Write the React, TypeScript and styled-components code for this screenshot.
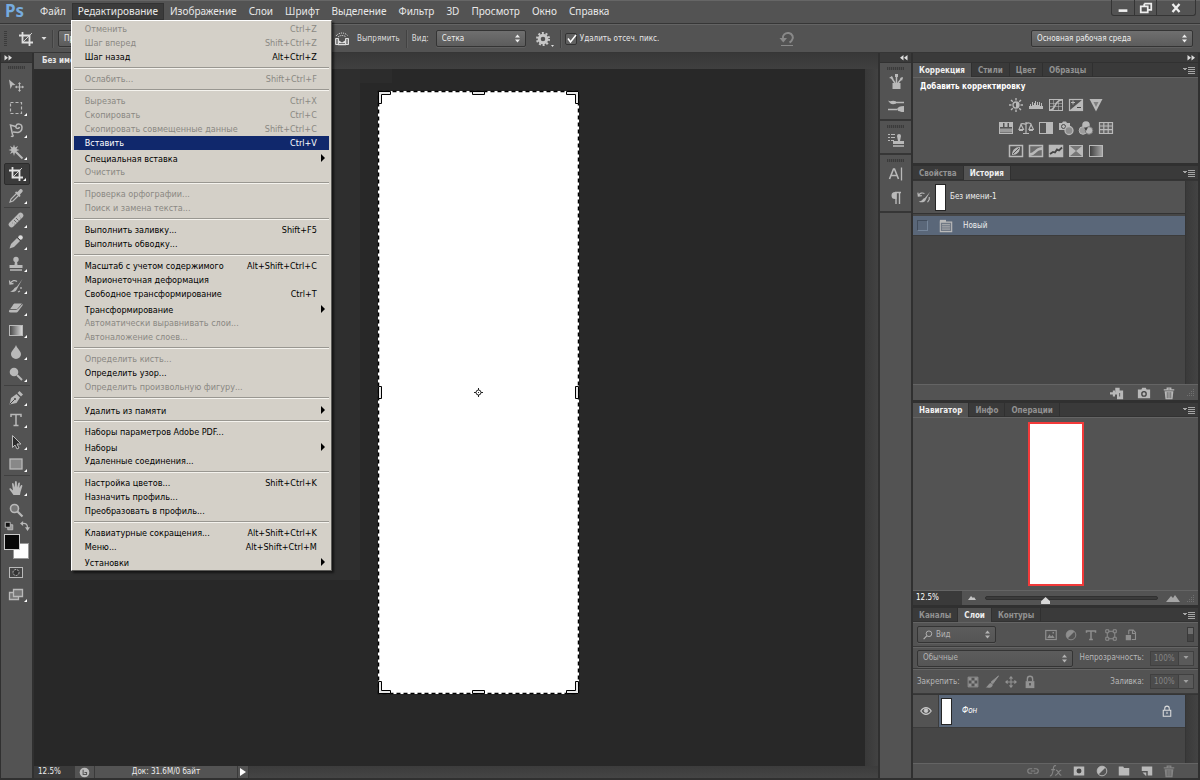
import React from "react";
import styled, { createGlobalStyle, css } from "styled-components";

const c = {
  face: "#535353",
  bar: "#3a3a3a",
  dark: "#2b2b2b",
  light: "#646464",
  list: "#464646",
  selected: "#5a6779",
  text: "#dedede",
  icon: "#b9b9b9",
};

const Global = createGlobalStyle`
  *, *::before, *::after { box-sizing: border-box; }
  body { margin: 0; background: ${c.dark}; }
  button, input, select {
    margin: 0; padding: 0; border: 0; background: none; color: inherit;
    font: inherit; border-radius: 0; outline: 0;
  }
  ul { list-style: none; margin: 0; padding: 0; }
  h2, p { margin: 0; font: inherit; }
  svg { display: block; flex: none; }
`;

const Shell = styled.div`
  display: flex;
  flex-direction: column;
  height: 100vh;
  min-height: 700px;
  overflow: hidden;
  color: ${c.text};
  font: 8px/12px "DejaVu Sans Condensed", "Liberation Sans", sans-serif;
`;

/* ---------- icons ---------- */

type IconProps = { size?: number; children: React.ReactNode };
const Icon = ({ size = 16, children }: IconProps) => (
  <svg width={size} height={size} viewBox="0 0 16 16" fill="none" stroke="currentColor" strokeWidth="1" aria-hidden="true">
    {children}
  </svg>
);

const CropIcon = () => (
  <Icon>
    <path d="M4.500 1v10.500H15M1 4.500h10.500V15" strokeWidth="1.800" />
    <path d="M4.500 11.500L14 2" strokeWidth=".9" />
  </Icon>
);

const toolGroups: { name: string; more?: boolean; art: React.ReactNode }[][] = [
  [
    { name: "Перемещение", art: <Icon><path d="M1 1.500l6.500 5.500-3.200.2L2.500 11z" fill="currentColor" stroke="none" /><path d="M11.500 5v8M7.500 9h8" strokeWidth="1.200" /><path d="M10 6l1.500-2L13 6zM10 12l1.500 2 1.500-2zM9 7.500L7 9l2 1.500zM14 7.500L16 9l-2 1.500z" fill="currentColor" stroke="none" /></Icon> },
    { name: "Область", more: true, art: <Icon><rect x="2.500" y="2.500" width="11" height="11" strokeDasharray="3 2" strokeWidth="1.200" /></Icon> },
    { name: "Лассо", more: true, art: <Icon><path d="M4.500 12.500L2.500 3l5 1.500M4.500 12.500c1.500 1.500 0 2.500-1.500 1.500M5 10l5 .5c2.500-.5 4-2.500 4-5 0-4-5-4.500-6-1.500s3 3 3.500 1" strokeWidth="1.500" /></Icon> },
    { name: "Волшебная палочка", more: true, art: <Icon><path d="M6 .5l1 3 3-1.500-1.500 3 3 1-3 1 1 3L7 8.500 6 12 5 8.500 2 10l1.500-3L.5 6l3-1L2 2l3 1.500z" fill="currentColor" stroke="none" /><path d="M8 8l6.500 6.500" strokeWidth="2" /></Icon> },
    { name: "Рамка", more: true, art: <CropIcon /> },
    { name: "Пипетка", more: true, art: <Icon><path d="M9 5L3 11l-1 3 3-1 6-6" strokeWidth="1.200" /><path d="M8 3.500l1.500.5L12 1.300c1.500-1 3.500 1 2.500 2.500L12 6.500l.5 1.500-1 1L7 4.500z" fill="currentColor" stroke="none" /></Icon> },
  ],
  [
    { name: "Восстанавливающая кисть", more: true, art: <Icon><path d="M3.500 12.500l9-9" strokeWidth="5.500" strokeLinecap="round" /><path d="M6 8l2.500 2.500M8 6l2.500 2.500M4 11h.5M6 12h.5M11 4h.5M12 6h.5" stroke="#666" /></Icon> },
    { name: "Карандаш", more: true, art: <Icon><path d="M1.500 14.500L3 10l6-6 3 3-6 6z" fill="currentColor" stroke="none" /><circle cx="12.500" cy="3.500" r="2.300" fill="#ddd" stroke="none" /><path d="M9.500 3.500l3 3" stroke="#444" /></Icon> },
    { name: "Штамп", more: true, art: <Icon><circle cx="8" cy="3.500" r="2.700" fill="currentColor" stroke="none" /><path d="M7 5h2l.5 4h5v3h-13V9h5z" fill="currentColor" stroke="none" /><path d="M2 14h12" strokeWidth="1.500" /></Icon> },
    { name: "Архивная кисть", more: true, art: <Icon><path d="M14.500 1L9 8.500 6.500 10c-1 2-2.500 3-4.500 3.500 3 1 6 .5 7-2.500l1-2z" fill="currentColor" stroke="none" /><path d="M2 6c2-4 5-4 7-2.500M1.500 2.500L2 6l3.500-.5M13 9v2M12 13l-2 1" strokeWidth="1.300" /></Icon> },
    { name: "Ластик", more: true, art: <Icon><path d="M7 3.500h6c1.500 0 2 1 1.500 2L10 11.500c-.5.700-1 1-2 1H2.500c-1.500 0-2-1-1.300-2L5 5c.5-1 1-1.500 2-1.500z" fill="currentColor" stroke="none" /><path d="M2 9.500h6.500c.7 0 1-.5 1.500-1L14 4" stroke="#666" /></Icon> },
    { name: "Градиент", more: true, art: <Icon><defs><linearGradient id="toolGradient"><stop stopColor="#444" /><stop offset="1" stopColor="#ddd" /></linearGradient></defs><rect x="1.500" y="3.500" width="13" height="10" fill="url(#toolGradient)" /></Icon> },
    { name: "Размытие", more: true, art: <Icon><path d="M8 1C6.500 5 3 7 3 10.200a5 4.800 0 0010 0C13 7 9.500 5 8 1z" fill="currentColor" stroke="none" /></Icon> },
    { name: "Осветлитель", more: true, art: <Icon><circle cx="6" cy="6" r="4.300" fill="currentColor" stroke="none" /><path d="M9 9l5 5" strokeWidth="2" /></Icon> },
  ],
  [
    { name: "Перо", more: true, art: <Icon><path d="M1.500 14.500L3 8l5.500-4 3.500 3.500L8.500 13zM9.500 3l2-2 3.500 3.500-2 2z" fill="currentColor" stroke="none" /><path d="M2 14l4.500-4.500" stroke="#444" /><circle cx="7" cy="9" r="1" fill="#444" stroke="none" /></Icon> },
    { name: "Текст", more: true, art: <Icon><path d="M3 5V2.500h10V5M8 2.500v11M5.500 13.500h5" strokeWidth="1.500" /></Icon> },
    { name: "Выделение контура", more: true, art: <Icon><path d="M4.500 1.500v12L7 11l2 4 2-1-2-4h4z" fill="#2c2c2c" /></Icon> },
    { name: "Прямоугольник", more: true, art: <Icon><rect x="2" y="3" width="12" height="10" fill="#888" strokeWidth="1.300" /></Icon> },
  ],
  [
    { name: "Рука", more: true, art: <Icon><path d="M5.500 15L1.500 9.500c-.5-1 .8-1.600 1.500-.8L5 10.500 4 4c0-1.200 1.500-1.200 1.700 0l.8 3.500L7 2c.1-1.200 1.700-1.200 1.800 0l.2 5.500L10.300 3c.4-1 1.700-.7 1.600.4L11.300 8l1.500-2.500c.6-.9 1.800-.3 1.500.7L12.500 12l-.5 3z" fill="currentColor" stroke="none" /></Icon> },
    { name: "Масштаб", art: <Icon><circle cx="6.500" cy="6.500" r="4" fill="#777" strokeWidth="1.600" /><path d="M9.500 9.500l5 5" strokeWidth="2.200" /></Icon> },
  ],
];

const Chevrons = ({ left }: { left?: boolean }) => (
  <svg width="8" height="6" viewBox="0 0 8 6" fill={c.text} aria-hidden="true">
    {left ? <path d="M3.500 0v5.500L0 2.800zM7.500 0v5.500L4 2.800z" /> : <path d="M.5 0v5.500L4 2.800zM4.500 0v5.500L8 2.800z" />}
  </svg>
);
const UpDown = () => (
  <svg width="7" height="9" viewBox="0 0 7 9" fill="currentColor" aria-hidden="true">
    <path d="M3.500 0.500L6 3.500H1zM3.500 8.500L1 5.500h5z" />
  </svg>
);
const Caret = () => (
  <svg width="6" height="4" viewBox="0 0 6 4" fill="currentColor" aria-hidden="true"><path d="M.5 0h5L3 3z" /></svg>
);
const Grip = styled.span<{ $down?: boolean }>`
  flex: none;
  display: block;
  ${p => p.$down
    ? css`width: 3px; height: 16px; background: repeating-linear-gradient(#3b3b3b 0 1px, transparent 1px 2px);`
    : css`width: 17px; height: 3px; background: repeating-linear-gradient(90deg, #3b3b3b 0 1px, #4c4c4c 1px 2px);`}
`;
const Corner = () => (
  <svg width="9" height="9" viewBox="0 0 9 9" stroke="#707070" strokeDasharray="1 1" aria-hidden="true">
    <path d="M8.500 1v8M6.500 3v6M4.500 5v4M2.500 7v2" />
  </svg>
);

/* ---------- menu bar ---------- */

const MenuBar = styled.header`
  display: flex;
  flex: none;
  height: 24px;
  background: ${c.face};
  border-top: 1px solid #666;
  border-bottom: 1px solid #363636;
`;
const Logo = styled.span`
  width: 34px;
  padding-left: 5px;
  color: #76abdf;
  font: 700 17px/20px "Noto Sans", sans-serif;
`;
const MenuNames = styled.ul`
  display: flex;
  align-items: flex-start;
  padding-top: 2px;
`;
const MenuHost = styled.li`
  position: relative;
`;
const MenuName = styled.button<{ $open?: boolean }>`
  display: block;
  height: 17px;
  padding: 0 6px;
  color: #e8e8e8;
  font: 10px/17px "Noto Sans", sans-serif;
  ${p => p.$open && css`background: #3b3b3b; box-shadow: inset 0 0 0 1px #333;`}
`;
const WindowButtons = styled.div`
  display: flex;
  margin: -1px 4px 0 auto;
  height: 16px;
  border: 1px solid #353535;
  border-top: 0;
  border-radius: 0 0 3px 3px;
`;
const WindowButton = styled.button<{ $wide?: boolean }>`
  display: flex;
  align-items: center;
  justify-content: center;
  width: ${p => (p.$wide ? 39 : 22)}px;
  color: #eee;
  & + & { border-left: 1px solid #353535; }
`;

/* ---------- drop-down menu ---------- */

const Drop = styled.ul`
  position: absolute;
  z-index: 10;
  top: 100%;
  left: -1px;
  width: 261px;
  padding: 1px 2px;
  background: #d4d0c8;
  border: 1px solid #fff;
  border-right-color: #5c5b58;
  border-bottom-color: #5c5b58;
  box-shadow: 2px 2px 2px rgba(0, 0, 0, 0.55);
`;
const Command = styled.button<{ $on?: boolean; $sub?: boolean }>`
  display: flex;
  justify-content: space-between;
  align-items: center;
  width: 100%;
  height: ${p => (p.$sub ? 15 : 14)}px;
  padding: ${p => (p.$sub ? "2px 3px 0 11px" : "0 12px 0 11px")};
  background: ${p => (p.$on ? "#10286c" : "transparent")};
  color: ${p => (p.$on ? "#fff" : "#000")};
  font-size: 9px;
  line-height: 14px;
  text-align: left;
  white-space: nowrap;
  &:disabled { color: #8a8883; }
`;
const Rule = styled.li`
  height: 8px;
  padding-top: 3px;
  &::before {
    content: "";
    display: block;
    height: 2px;
    background: #999791;
    border-bottom: 1px solid #f5f3ee;
  }
`;
type Cmd = { t: string; k?: string; off?: boolean; sub?: boolean; on?: boolean };
const commands: Cmd[][] = [
  [{ t: "Отменить", k: "Ctrl+Z", off: true }, { t: "Шаг вперед", k: "Shift+Ctrl+Z", off: true }, { t: "Шаг назад", k: "Alt+Ctrl+Z" }],
  [{ t: "Ослабить...", k: "Shift+Ctrl+F", off: true }],
  [
    { t: "Вырезать", k: "Ctrl+X", off: true }, { t: "Скопировать", k: "Ctrl+C", off: true },
    { t: "Скопировать совмещенные данные", k: "Shift+Ctrl+C", off: true }, { t: "Вставить", k: "Ctrl+V", on: true },
    { t: "Специальная вставка", sub: true }, { t: "Очистить", off: true },
  ],
  [{ t: "Проверка орфографии...", off: true }, { t: "Поиск и замена текста...", off: true }],
  [{ t: "Выполнить заливку...", k: "Shift+F5" }, { t: "Выполнить обводку..." }],
  [
    { t: "Масштаб с учетом содержимого", k: "Alt+Shift+Ctrl+C" }, { t: "Марионеточная деформация" },
    { t: "Свободное трансформирование", k: "Ctrl+T" }, { t: "Трансформирование", sub: true },
    { t: "Автоматически выравнивать слои...", off: true }, { t: "Автоналожение слоев...", off: true },
  ],
  [{ t: "Определить кисть...", off: true }, { t: "Определить узор..." }, { t: "Определить произвольную фигуру...", off: true }],
  [{ t: "Удалить из памяти", sub: true }],
  [{ t: "Наборы параметров Adobe PDF..." }, { t: "Наборы", sub: true }, { t: "Удаленные соединения..." }],
  [{ t: "Настройка цветов...", k: "Shift+Ctrl+K" }, { t: "Назначить профиль..." }, { t: "Преобразовать в профиль..." }],
  [{ t: "Клавиатурные сокращения...", k: "Alt+Shift+Ctrl+K" }, { t: "Меню...", k: "Alt+Shift+Ctrl+M" }, { t: "Установки", sub: true }],
];
const EditMenu = () => (
  <Drop role="menu">
    {commands.map((group, i) => (
      <React.Fragment key={i}>
        {i > 0 && <Rule role="separator" />}
        {group.map(m => (
          <li key={m.t} role="none">
            <Command role="menuitem" disabled={m.off} $on={m.on} $sub={m.sub}>
              <span>{m.t}</span>
              {m.k && <span>{m.k}</span>}
              {m.sub && <svg width="5" height="10" viewBox="0 0 5 10" aria-hidden="true"><path d="M0 0v8l4-4z" fill="#000" /></svg>}
            </Command>
          </li>
        ))}
      </React.Fragment>
    ))}
  </Drop>
);
const names = ["Файл", "Редактирование", "Изображение", "Слои", "Шрифт", "Выделение", "Фильтр", "3D", "Просмотр", "Окно", "Справка"];

/* ---------- options bar ---------- */

const OptionsBar = styled.div`
  display: flex;
  align-items: center;
  flex: none;
  height: 29px;
  padding: 0 7px 0 4px;
  background: ${c.face};
  border-top: 1px solid ${c.light};
  border-bottom: 1px solid #363636;
`;
const Divider = styled.span`
  width: 2px;
  height: 18px;
  background: #424242;
  border-right: 1px solid #5d5d5d;
`;
const CurrentTool = styled.button`
  display: flex;
  align-items: center;
  gap: 7px;
  margin: 0 5px 0 11px;
  color: ${c.text};
`;
const SelectBox = styled.span<{ $width: number; $dim?: boolean }>`
  display: flex;
  align-items: center;
  width: ${p => p.$width}px;
  height: 17px;
  padding: 0 4px 0 5px;
  border: 1px solid #343434;
  border-radius: 2px;
  background: ${p => (p.$dim ? "linear-gradient(#5c5c5c, #555)" : "linear-gradient(#6f6f6f, #5c5c5c)")};
  box-shadow: 0 1px 0 #606060;
  color: ${p => (p.$dim ? "#b4b4b4" : "#eee")};
  select {
    appearance: none;
    flex: 1;
    min-width: 0;
  }
  svg + select { margin-left: 3px; }
`;
const Select = ({ label, value, width, dim, icon }: { label: string; value: string; width: number; dim?: boolean; icon?: React.ReactNode }) => (
  <SelectBox $width={width} $dim={dim}>
    {icon}
    <select aria-label={label} defaultValue={value}><option>{value}</option></select>
    <UpDown />
  </SelectBox>
);
const CropSize = styled.div`
  width: 276px;
  margin-left: 4px;
`;
const TextButton = styled.button`
  display: flex;
  align-items: center;
  gap: 7px;
  margin-right: 6px;
`;
const ViewGroup = styled.div`
  display: flex;
  align-items: center;
  gap: 7px;
  margin: 0 9px 0 4px;
`;
const GearButton = styled.button`
  display: flex;
  align-items: flex-end;
  margin-right: 6px;
  color: #c8c8c8;
`;
const CheckLabel = styled.label`
  display: flex;
  align-items: center;
  gap: 3px;
  margin-left: 3px;
  color: #e8e8e8;
  span { display: grid; }
  input, svg { grid-area: 1 / 1; }
  input {
    appearance: none;
    width: 12px;
    height: 12px;
    border: 1px solid #333;
    border-radius: 2px;
    background: #616161;
  }
  svg { pointer-events: none; }
`;
const ResetButton = styled.button`
  margin-left: 120px;
  color: #898989;
`;
const Right = styled.div`
  margin-left: auto;
`;

/* ---------- work area ---------- */

const WorkArea = styled.main`
  display: flex;
  flex: 1;
  min-height: 0;
  padding-bottom: 2px;
  background: #303030;
`;
const Tools = styled.nav`
  display: flex;
  flex-direction: column;
  align-items: center;
  flex: none;
  width: 31px;
  margin: 0 2px 0 1px;
  background: ${c.face};
`;
const StripHead = styled.div<{ $end?: boolean }>`
  display: flex;
  flex: none;
  align-items: center;
  justify-content: ${p => (p.$end ? "flex-end" : "flex-start")};
  align-self: stretch;
  height: 10px;
  padding: 0 3px;
  background: ${c.bar};
  border-bottom: 1px solid #313131;
`;
const ToolGroup = styled.div`
  display: flex;
  flex-direction: column;
  align-items: center;
  & + & { border-top: 1px solid #404040; padding-top: 1px; }
`;
const ToolsTop = styled.div`
  flex: none;
  height: 12px;
  padding-top: 3px;
`;
const ToolButton = styled.button<{ $on?: boolean }>`
  display: flex;
  align-items: center;
  justify-content: center;
  position: relative;
  width: 26px;
  height: 22px;
  padding-right: 2px;
  color: ${p => (p.$on ? "#e2e2e2" : c.icon)};
  ${p => p.$on && css`
    background: #3b3b3b;
    border: 1px solid #2c2c2c;
    border-radius: 2px;
  `}
`;
const Flyout = styled.svg`
  position: absolute;
  right: 3px;
  bottom: 3px;
`;
const More = () => (
  <Flyout width="3" height="3" viewBox="0 0 3 3" aria-hidden="true"><path d="M3 0v3H0z" fill="#fff" /></Flyout>
);
const SwapRow = styled.div`
  display: flex;
  justify-content: space-between;
  width: 26px;
  padding-bottom: 3px;
  color: ${c.icon};
`;
const Colours = styled.div`
  display: grid;
  width: 25px;
  height: 25px;
  margin-bottom: 2px;
`;
const Swatch = styled.button<{ $back?: boolean }>`
  grid-area: 1 / 1;
  width: 16px;
  height: 16px;
  background: ${p => (p.$back ? "#fff" : "#080808")};
  border: 1px solid ${p => (p.$back ? "#999" : "#ccc")};
  ${p => p.$back ? css`place-self: end;` : css`place-self: start; z-index: 1;`}
`;

const Doc = styled.section`
  display: flex;
  flex-direction: column;
  flex: 1;
  min-width: 0;
`;
const DocTabs = styled.div`
  display: flex;
  flex: none;
  height: 16px;
  background: linear-gradient(#383838, #404040);
`;
const DocTab = styled.button`
  width: 47px;
  padding: 0 0 0 8px;
  overflow: hidden;
  background: ${c.face};
  color: #e6e6e6;
  font-weight: 700;
  text-align: left;
  white-space: nowrap;
`;
const Stage = styled.div`
  display: flex;
  flex: 1;
  min-height: 0;
`;
const Canvas = styled.div`
  flex: 1;
  min-width: 0;
  padding: 21px 0 0 343px;
  background:
    linear-gradient(#2e2e2e, #2e2e2e) 0 0 / 326px 511px no-repeat,
    linear-gradient(#2c2c2c, #2c2c2c) 0 0 / 358px 14px no-repeat,
    #282828;
`;
const ScrollTrack = styled.div`
  flex: none;
  width: 13px;
  background: linear-gradient(90deg, #393939, #424242);
`;
const StatusBar = styled.footer`
  display: flex;
  flex: none;
  height: 12px;
  background: linear-gradient(#3c3c3c, #454545);
`;
const ZoomField = styled.input`
  width: 41px;
  padding-left: 4px;
  background: ${c.bar};
  color: #eee;
`;
const StatusCell = styled.div<{ $width: number }>`
  display: flex;
  align-items: center;
  justify-content: center;
  width: ${p => p.$width}px;
  background: ${c.face};
  border-right: 1px solid ${c.bar};
  color: #eee;
`;

/* ---------- panels ---------- */

const IconDock = styled.aside`
  display: flex;
  flex-direction: column;
  flex: none;
  width: 31px;
  margin: 0 2px;
  background: ${c.face};
`;
const DockGroup = styled.div`
  padding: 4px 0 5px;
  border-bottom: 2px solid #363636;
`;
const DockIcons = styled.div`
  display: flex;
  flex-direction: column;
  align-items: center;
  gap: 8px;
  padding-top: 4px;
  color: ${c.icon};
`;
const DockGrip = styled(Grip)`
  margin: 0 auto;
`;
const Panels = styled.aside`
  display: flex;
  flex-direction: column;
  flex: none;
  width: 285px;
  margin-right: 2px;
`;
const Panel = styled.section<{ $grow?: boolean }>`
  display: flex;
  flex-direction: column;
  flex: ${p => (p.$grow ? "1" : "none")};
  min-height: 0;
  background: ${c.face};
  & + & { margin-top: 3px; }
`;
const TabRow = styled.div`
  display: flex;
  flex: none;
  align-items: center;
  height: 14px;
  padding-right: 3px;
  background: ${c.bar};
  box-shadow: inset 0 -1px 0 #323232;
`;
const Tab = styled.button<{ $on?: boolean }>`
  height: 14px;
  padding: 1px 6px 0;
  border-right: 1px solid #303030;
  background: ${p => (p.$on ? c.face : "transparent")};
  color: ${p => (p.$on ? "#f0f0f0" : "#929292")};
  font-weight: 700;
  line-height: 13px;
`;
const PanelMenu = styled.button`
  margin-left: auto;
  color: #a5a5a5;
`;
const Tabs = ({ items, on }: { items: string[]; on: string }) => (
  <TabRow role="tablist">
    {items.map(t => <Tab key={t} role="tab" aria-selected={t === on} $on={t === on}>{t}</Tab>)}
    <PanelMenu aria-label="Меню панели">
      <svg width="12" height="8" viewBox="0 0 12 8" fill="currentColor" shapeRendering="crispEdges" aria-hidden="true">
        <path d="M0 2h4v1H0zM1 3h2v1H1zM5 1h7v1H5zM5 3h7v1H5zM5 5h7v1H5zM5 7h7v1H5z" />
      </svg>
    </PanelMenu>
  </TabRow>
);
const Adjustments = styled.div`
  height: 86px;
  border-top: 1px solid ${c.light};
`;
const Heading = styled.h2`
  padding: 2px 7px 0;
  color: #fff;
  font-weight: 700;
  line-height: 13px;
`;
const AdjustRow = styled.div`
  display: flex;
  justify-content: center;
  height: 23px;
  color: ${c.icon};
`;
const IconButton = styled.button<{ $width?: number }>`
  display: flex;
  align-items: center;
  justify-content: center;
  width: ${p => p.$width ?? 20}px;
`;
const FootIcon = styled(IconButton)<{ $faint?: boolean }>`
  color: ${p => (p.$faint ? "#858585" : c.icon)};
`;
const ListArea = styled.div`
  display: flex;
  flex: 1;
  min-height: 0;
  background: ${c.list};
  border-top: 1px solid #353535;
`;
const List = styled.div`
  flex: 1;
`;
const ListScroll = styled.div`
  width: 13px;
  background: linear-gradient(90deg, #3a3a3a, #434343);
  border-left: 1px solid #353535;
`;
const Snapshot = styled.div`
  display: flex;
  align-items: center;
  gap: 4px;
  height: 33px;
  padding: 0 4px;
  background: ${c.face};
  border-bottom: 1px solid #333;
  color: #eee;
`;
const Thumb = styled.span`
  width: 11px;
  height: 27px;
  background: #fff;
  border: 1px solid #262626;
`;
const HistoryState = styled.div`
  display: flex;
  align-items: center;
  height: 20px;
  margin-top: 2px;
  padding-left: 4px;
  background: ${c.selected};
  border-bottom: 1px solid #3c3c3c;
  color: #eee;
  svg { margin: 0 10px 0 11px; color: ${c.icon}; }
`;
const Box = styled.span`
  width: 11px;
  height: 11px;
  border: 1px solid #424d5c;
  border-right-color: #76869a;
  border-bottom-color: #76869a;
`;
const PanelFoot = styled.div<{ $tall?: boolean }>`
  display: flex;
  flex: none;
  align-items: center;
  justify-content: flex-end;
  height: ${p => (p.$tall ? 16 : 15)}px;
  border-top: 1px solid ${c.light};
`;
const NavView = styled.div`
  display: flex;
  justify-content: center;
  align-items: center;
  height: 173px;
  border-top: 1px solid ${c.light};
`;
const NavFrame = styled.div`
  width: 56px;
  height: 164px;
  background: #fff;
  border: 2px solid #f23a3a;
`;
const NavZoom = styled.input`
  align-self: stretch;
  width: 49px;
  padding-left: 3px;
  background: ${c.bar};
  color: #fff;
`;
const NavSlider = styled.input`
  appearance: none;
  flex: 1;
  min-width: 0;
  height: 14px;
  margin: 0 8px 0 3px;
  &::-webkit-slider-runnable-track {
    height: 4px;
    background: #3b3b3b;
    border: 1px solid #303030;
    border-radius: 2px;
  }
  &::-webkit-slider-thumb {
    appearance: none;
    width: 9px;
    height: 7px;
    background: #d8d8d8;
    clip-path: polygon(50% 0, 100% 60%, 100% 100%, 0 100%, 0 60%);
  }
`;
const LayerRow = styled.div<{ $height: number }>`
  display: flex;
  align-items: center;
  height: ${p => p.$height}px;
  padding: 0 4px;
  border-top: 1px solid ${c.light};
  border-bottom: 1px solid #3a3a3a;
  color: #b8b8b8;
`;
const FilterIcons = styled.div`
  display: flex;
  margin: 0 46px 0 auto;
  color: #8e8e8e;
`;
const FilterSwitch = styled.button`
  width: 7px;
  height: 15px;
  border: 1px solid #3a3a3a;
  background: linear-gradient(#6d6d6d 50%, #444 50%);
`;
const Percent = styled.label`
  display: flex;
  align-items: center;
  gap: 6px;
  margin-left: auto;
  input {
    width: 29px;
    height: 15px;
    padding-left: 3px;
    border: 1px solid #404040;
    background: #4c4c4c;
    color: #858585;
  }
`;
const Spin = styled.button`
  display: flex;
  align-items: center;
  justify-content: center;
  width: 15px;
  height: 15px;
  border: 1px solid #404040;
  border-left: 0;
  background: #5a5a5a;
  color: #a0a0a0;
`;
const LockIcons = styled.div`
  display: flex;
  margin-left: 4px;
  color: #929292;
`;
const LayerList = styled(ListArea)`
  flex: none;
  height: 69px;
`;
const LayerItem = styled.div`
  display: flex;
  height: 33px;
  background: ${c.face};
  border-bottom: 1px solid #3c3c3c;
`;
const Eye = styled.button`
  display: flex;
  align-items: center;
  justify-content: center;
  width: 26px;
  border-right: 1px solid #3c3c3c;
  color: #c8c8c8;
`;
const LayerName = styled.div`
  display: flex;
  flex: 1;
  align-items: center;
  gap: 10px;
  padding: 0 12px 0 2px;
  background: ${c.selected};
  color: #fff;
  svg { margin-left: auto; color: #ddd; }
`;

const adjust: React.ReactNode[][] = [
  [
    <Icon><circle cx="8" cy="8" r="3" strokeWidth="1.300" /><path d="M8 5a3 3 0 010 6z" fill="currentColor" stroke="none" /><path d="M8 1v2.500M8 12.500V15M1 8h2.500M12.500 8H15M3 3l1.800 1.800M11.200 11.200L13 13M3 13l1.800-1.800M11.200 4.800L13 3" strokeWidth="1.400" /></Icon>,
    <Icon><path d="M1 12V9h1V7h1v2h1V5h1v3h1V6h1V4h1v4h1V5h1v3h1V5h1v4h1V6h1v3h1v3z" fill="currentColor" stroke="none" /></Icon>,
    <Icon><rect x="1.500" y="2.500" width="13" height="11" /><path d="M5.500 3v10M10.500 3v10M2 6.500h12M2 9.500h12" opacity=".55" /><path d="M2 13c6 0 4-10 12-10" strokeWidth="1.600" /></Icon>,
    <Icon><rect x="1.500" y="2.500" width="13" height="11" strokeWidth="1.200" /><path d="M14 3v10H2z" fill="currentColor" stroke="none" /><path d="M3 5.500h4M5 3.500v4" /><path d="M9 10.500h4" stroke="#444" /></Icon>,
    <Icon><path d="M1.500 2h13L8 14.500z" fill="currentColor" stroke="none" /><path d="M5.500 5h5L8 10z" fill="#808080" stroke="none" /></Icon>,
  ],
  [
    <Icon><rect x="1.500" y="2.500" width="13" height="11" /><path d="M2 3h3v4H2zM6.500 3h3v4h-3zM11 3h3v4h-3z" fill="currentColor" stroke="none" /><path d="M2 10.500h12" strokeWidth="4" opacity=".7" /></Icon>,
    <Icon><path d="M8 2v11M5 13.500h6M2.500 4.500C5 2 7 5 8 4s3-2 5.500.5M3 4.500l-2 5h4.500zM13 4.500l-2 5h4.500zM1 10.500h4M11 10.500h4" strokeWidth="1.200" /></Icon>,
    <Icon><rect x="1.500" y="2.500" width="13" height="11" /><path d="M8 3h6v10H8z" fill="currentColor" stroke="none" /></Icon>,
    <Icon><path d="M1 3h3l1-1.500h3L9 3h3v3a5 5 0 00-5 4H1z" fill="currentColor" stroke="none" /><circle cx="5.500" cy="6.500" r="2" stroke="#4a4a4a" /><circle cx="11" cy="10.500" r="4" fill="#8d8d8d" strokeWidth="1.300" /></Icon>,
    <Icon><circle cx="8" cy="5" r="3.800" fill="currentColor" stroke="none" /><circle cx="5" cy="10.500" r="3.800" fill="#9c9c9c" /><circle cx="11" cy="10.500" r="3.800" fill="currentColor" stroke="#777" /><path d="M6 7.500h4L8 11z" fill="#444" stroke="none" /></Icon>,
    <Icon><path d="M1 2.500h14v11H1z" fill="#666" stroke="none" /><path d="M1 2.500h14M1 6h14M1 9.700h14M1 13.500h14M1.500 2v12M5.800 2v12M10.200 2v12M14.500 2v12" strokeWidth="1.200" /></Icon>,
  ],
  [
    <Icon><rect x="1.500" y="2.500" width="13" height="11" strokeWidth="1.500" /><path d="M4 12c0-5 3-8 8-8 0 5-3 8-8 8z" fill="currentColor" stroke="none" /><path d="M5 11l6-6" stroke="#555" /></Icon>,
    <Icon><rect x="1.500" y="2.500" width="13" height="11" strokeWidth="1.500" fill="#6c6c6c" /><path d="M2 10c4 0 5-5 12-6v3c-6 0-6 5-12 6z" fill="currentColor" stroke="none" /></Icon>,
    <Icon><rect x="1.500" y="2.500" width="13" height="11" strokeWidth="1.500" fill="currentColor" /><path d="M2 11l3-2 2 .5 2-3 2 1 3-3" stroke="#454545" strokeWidth="1.800" /></Icon>,
    <Icon><rect x="1.500" y="2.500" width="13" height="11" fill="#777" /><path d="M2 3l6 5-6 5zM14 3L8 8l6 5z" fill="currentColor" stroke="none" /></Icon>,
    <Icon><defs><linearGradient id="mapGradient"><stop stopColor="#3d3d3d" /><stop offset="1" stopColor="#aaa" /></linearGradient></defs><rect x="1.500" y="2.500" width="13" height="11" fill="url(#mapGradient)" /></Icon>,
  ],
];

const TrashIcon = () => <Icon size={14}><path d="M3 6h10l-1 9H4z" fill="currentColor" stroke="none" /><path d="M2 4.500h12M6 4V2.500h4V4" strokeWidth="1.500" /><path d="M6 7v7M8 7v7M10 7v7" stroke="#666" /></Icon>;
const LockIcon = () => <Icon size={14}><path d="M3 7h10v8H3z" fill="currentColor" stroke="none" /><path d="M5 7V4.500a3 3 0 016 0V7" strokeWidth="1.600" /><path d="M8 9v3" stroke="#444" strokeWidth="1.600" /></Icon>;
const HalfIcon = () => <Icon size={14}><circle cx="8" cy="8" r="5.500" fill="currentColor" stroke="none" /><path d="M12 4L4 12a5.500 5.500 0 008 0 5.500 5.500 0 000-8z" fill="#555" stroke="none" /><circle cx="8" cy="8" r="5.500" /></Icon>;

const Artboard = () => (
  <svg width="203" height="605" viewBox="0 0 203 605" role="img" aria-label="Без имени-1">
    <rect x="1" y="1" width="201" height="603" fill="#fff" />
    <rect x="1.500" y="1.500" width="200" height="602" fill="none" stroke="#000" strokeWidth="1.500" strokeDasharray="4 3" />
    <g fill="#e6e6e6" stroke="#000">
      <path d="M1.500 1.500h12v3h-9v9h-3zM201.500 1.500h-12v3h9v9h3zM1.500 603.500h12v-3h-9v-9h-3zM201.500 603.500h-12v-3h9v-9h3z" />
      <path d="M95.500 1.500h12v3h-12zM95.500 600.500h12v3h-12zM1.500 296.500h3v12h-3zM198.500 296.500h3v12h-3z" />
    </g>
    <g stroke="#222" fill="none">
      <circle cx="101.500" cy="302.500" r="2.500" />
      <path d="M101.500 298v2M101.500 305v2M97 302.500h2M104 302.500h2M101 302.500h1" />
    </g>
  </svg>
);

export default function App() {
  return (
    <Shell>
      <Global />
      <MenuBar>
        <Logo>Ps</Logo>
        <MenuNames role="menubar">
          {names.map(n => (
            <MenuHost key={n} role="none">
              <MenuName role="menuitem" $open={n === "Редактирование"}>{n}</MenuName>
              {n === "Редактирование" && <EditMenu />}
            </MenuHost>
          ))}
        </MenuNames>
        <WindowButtons>
          <WindowButton aria-label="Свернуть"><Icon size={14}><path d="M3 11h10" strokeWidth="3" /></Icon></WindowButton>
          <WindowButton aria-label="Восстановить"><Icon size={14}><path d="M6 3h8v7h-3M6 3v3M2 6h8v7H2z" strokeWidth="2" /></Icon></WindowButton>
          <WindowButton aria-label="Закрыть" $wide><Icon size={14}><path d="M4 3.500l8 9M12 3.500l-8 9" strokeWidth="2.600" /></Icon></WindowButton>
        </WindowButtons>
      </MenuBar>

      <OptionsBar>
        <Grip $down />
        <CurrentTool aria-label="Рамка"><CropIcon /><Caret /></CurrentTool>
        <Divider />
        <CropSize><Select label="Пропорции" value="Произвольно" width={110} /></CropSize>
        <TextButton>
          <Icon><path d="M1.500 7.500h3v6h-3zM11.500 7.500h3v6h-3z" fill="#888" /><path d="M4 13.500h8" strokeWidth="1.500" /><path d="M5 9.500l3 2 3-2V12H5z" fill="currentColor" stroke="none" /><path d="M2 5C5 1 11 1 14 5M4 6c2-2 6-2 8 0" strokeDasharray="1 1" /></Icon>
          Выпрямить
        </TextButton>
        <Divider />
        <ViewGroup>Вид:<Select label="Вид" value="Сетка" width={90} /></ViewGroup>
        <GearButton aria-label="Параметры">
          <Icon><circle cx="8" cy="8" r="3.800" strokeWidth="3" /><circle cx="8" cy="8" r="6" strokeWidth="2" strokeDasharray="2 1.770" /></Icon>
          <svg width="3" height="3" viewBox="0 0 3 3" aria-hidden="true"><path d="M0 1h3L1.500 3z" fill="#ddd" /></svg>
        </GearButton>
        <Divider />
        <CheckLabel>
          <span>
            <input type="checkbox" defaultChecked />
            <svg width="12" height="12" viewBox="0 0 12 12" aria-hidden="true"><path d="M3 5.500l2.500 3.500L11 2" fill="none" stroke="#fff" strokeWidth="1.500" /></svg>
          </span>
          Удалить отсеч. пикс.
        </CheckLabel>
        <ResetButton aria-label="Сбросить"><Icon><path d="M4 7.500a5 4.500 0 119 1.500c-.5 1.500-1.500 2-2.500 2.500" strokeWidth="2" /><path d="M.5 7H8l-3.700 4.500z" fill="currentColor" stroke="none" /><path d="M2 14.500h12" /></Icon></ResetButton>
        <Right><Select label="Рабочая среда" value="Основная рабочая среда" width={162} /></Right>
      </OptionsBar>

      <WorkArea>
        <Tools>
          <StripHead><Chevrons /></StripHead>
          <ToolsTop><Grip /></ToolsTop>
          {toolGroups.map((g, i) => (
            <ToolGroup key={i}>
              {g.map(t => (
                <ToolButton key={t.name} aria-label={t.name} $on={t.name === "Рамка"}>
                  {t.art}
                  {t.more && <More />}
                </ToolButton>
              ))}
            </ToolGroup>
          ))}
          <SwapRow>
            <Icon size={10}><path d="M6 6h8v8H6z" fill="#999" strokeWidth="1.500" /><path d="M2 2h8v8H2z" fill="#111" strokeWidth="1.500" /></Icon>
            <Icon size={10}><path d="M4 4c6-1 8 2 8 7" strokeWidth="2" /><path d="M5 0v8L0 4zM8 10h8l-4 6z" fill="currentColor" stroke="none" /></Icon>
          </SwapRow>
          <Colours>
            <Swatch aria-label="Основной цвет" />
            <Swatch aria-label="Фоновый цвет" $back />
          </Colours>
          <ToolButton aria-label="Быстрая маска"><Icon><rect x="1.500" y="3.500" width="13" height="10" fill="#444" /><circle cx="8" cy="8.500" r="3" fill="#333" strokeDasharray="2 1" /></Icon></ToolButton>
          <ToolButton aria-label="Режим экрана"><Icon><path d="M1.500 6.500h9v7h-9z" fill="#777" strokeWidth="1.300" /><path d="M5.500 3.500h9v7h-9z" fill="#777" strokeWidth="1.300" /></Icon><More /></ToolButton>
        </Tools>

        <Doc>
          <DocTabs><DocTab>Без имени-1</DocTab></DocTabs>
          <Stage>
            <Canvas><Artboard /></Canvas>
            <ScrollTrack />
          </Stage>
          <StatusBar>
            <ZoomField aria-label="Масштаб" defaultValue="12.5%" />
            <StatusCell $width={20}><Icon size={11}><circle cx="8" cy="8" r="7" fill="#bbb" stroke="none" /><path d="M6 4v7h5V8H8" stroke="#555" strokeWidth="1.500" /></Icon></StatusCell>
            <StatusCell $width={143}>Док: 31.6M/0 байт</StatusCell>
            <StatusCell $width={11}><svg width="6" height="8" viewBox="0 0 6 8" aria-hidden="true"><path d="M0 0v8l6-4z" fill="#fff" /></svg></StatusCell>
          </StatusBar>
        </Doc>

        <IconDock>
          <StripHead $end><Chevrons left /></StripHead>
          <DockGroup>
            <DockGrip />
            <DockIcons>
              <Icon><path d="M4.500 9h8v6h-8z" fill="currentColor" stroke="none" /><path d="M7 9L3 3M8.500 9V2M10 9l4-5" strokeWidth="1.500" /><path d="M1 4l3-2 1.500 3zM12 4l3-1-1 4zM7 0h3v3H7z" fill="currentColor" stroke="none" /></Icon>
              <Icon><path d="M6 4.500h10M0 11.500h9" strokeWidth="1.500" /><path d="M0 2.500c3 2 4-1 8 1v2c-4 2-6 0-8-3zM16 8c-4 0-6 1-7 3 1 3 4 3 7 3z" fill="currentColor" stroke="none" /></Icon>
            </DockIcons>
          </DockGroup>
          <DockGroup>
            <DockGrip />
            <DockIcons>
              <Icon><path d="M0 2.500h2M0 5.500h2M0 8.500h2M3 2.500h4M3 5.500h4M3 8.500h3" /><path d="M9 4a2 2 0 114 0l-1 5h4v3H5V9h5z" fill="currentColor" stroke="none" /><path d="M5 14h11" strokeWidth="1.500" /></Icon>
            </DockIcons>
          </DockGroup>
          <DockGroup>
            <DockGrip />
            <DockIcons>
              <Icon><path d="M1.500 13L5.500 3h1l4 10M3 9.500h6" strokeWidth="1.600" /><path d="M13.500 1.500v13" strokeWidth="1.300" /></Icon>
              <Icon><path d="M8 3v11M11.500 3v11M13 2.500H7" strokeWidth="1.400" /><path d="M8.500 2H7a3.500 3.500 0 000 7h1.500z" fill="currentColor" stroke="none" /></Icon>
            </DockIcons>
          </DockGroup>
        </IconDock>

        <Panels>
          <StripHead $end><Chevrons /></StripHead>
          <Panel>
            <Tabs items={["Коррекция", "Стили", "Цвет", "Образцы"]} on="Коррекция" />
            <Adjustments>
              <Heading>Добавить корректировку</Heading>
              {adjust.map((row, i) => (
                <AdjustRow key={i}>{row.map((a, j) => <IconButton key={j} aria-label={`Коррекция ${i + 1}.${j + 1}`}>{a}</IconButton>)}</AdjustRow>
              ))}
            </Adjustments>
          </Panel>

          <Panel $grow>
            <Tabs items={["Свойства", "История"]} on="История" />
            <ListArea>
              <List>
                <Snapshot>
                  <Icon size={14}><path d="M15 2L9 9l-2 1c-1 2-3 3-5 3 3 2 7 1 8-2l1-2z" fill={c.icon} stroke="none" /><path d="M1.500 7c1-4 5-4 7-3M1 3l.5 4 4-.5M14 8v3l-2 3" stroke={c.icon} strokeWidth="1.300" /></Icon>
                  <Thumb />
                  Без имени-1
                </Snapshot>
                <HistoryState>
                  <Box />
                  <Icon size={14}><path d="M1 1h7v3H1z" fill="currentColor" stroke="none" /><path d="M1.500 3.500h13v11h-13z" fill="#707884" strokeWidth="1.300" /><path d="M3.500 6.500h9M3.500 9h9M3.500 11.500h9" /></Icon>
                  Новый
                </HistoryState>
              </List>
              <ListScroll />
            </ListArea>
            <PanelFoot $tall>
              <FootIcon $width={26} aria-label="Новый документ"><Icon size={14}><path d="M6 2h5v3h4v10H8V9H6z" fill="currentColor" stroke="none" /><path d="M0 8.500h8M4.500 5v7" strokeWidth="2.500" /><path d="M11 8v4" stroke="#555" /></Icon></FootIcon>
              <FootIcon $width={28} aria-label="Новый снимок"><Icon size={14}><path d="M1 4h4l1-2h4l1 2h4v10H1z" fill="currentColor" stroke="none" /><circle cx="8" cy="9" r="2.500" stroke="#444" strokeWidth="1.500" /></Icon></FootIcon>
              <FootIcon $width={22} aria-label="Удалить"><TrashIcon /></FootIcon>
              <IconButton $width={18} as="span"><Corner /></IconButton>
            </PanelFoot>
          </Panel>

          <Panel>
            <Tabs items={["Навигатор", "Инфо", "Операции"]} on="Навигатор" />
            <NavView><NavFrame /></NavView>
            <PanelFoot>
              <NavZoom aria-label="Масштаб навигатора" defaultValue="12.5%" />
              <IconButton aria-label="Мельче"><svg width="8" height="4" viewBox="0 0 8 4" aria-hidden="true"><path d="M0 4l3-4 2 2 1-1 2 3z" fill="#c4c4c4" /></svg></IconButton>
              <NavSlider type="range" aria-label="Ползунок масштаба" min={0} max={100} defaultValue={34} />
              <svg width="14" height="7" viewBox="0 0 14 7" aria-hidden="true"><path d="M0 7l5-6 2 2 2-3 5 7z" fill="#a5a5a5" /></svg>
              <IconButton as="span" $width={18}><Corner /></IconButton>
            </PanelFoot>
          </Panel>

          <Panel>
            <Tabs items={["Каналы", "Слои", "Контуры"]} on="Слои" />
            <LayerRow $height={25}>
              <Select label="Фильтр слоев" value="Вид" width={79} dim icon={<Icon size={10}><circle cx="9.500" cy="6" r="4.500" strokeWidth="1.500" /><path d="M6 9.500l-5 5" strokeWidth="1.800" /></Icon>} />
              <FilterIcons>
                <IconButton aria-label="Пиксельные слои"><Icon size={12}><rect x="1" y="2" width="14" height="12" strokeWidth="1.600" /><path d="M3 12l3-5 2 3 2-2 3 4zM10 4h2v2h-2z" fill="currentColor" stroke="none" /></Icon></IconButton>
                <IconButton aria-label="Корректирующие слои"><HalfIcon /></IconButton>
                <IconButton aria-label="Текстовые слои"><Icon size={12}><path d="M2 5V2.500h12V5M8 2.500v11M5.500 14h5" strokeWidth="2" /></Icon></IconButton>
                <IconButton aria-label="Слои-фигуры"><Icon size={12}><path d="M3 3h10v10H3z" strokeWidth="1.300" /><path d="M1 1h4v4H1zM11 1h4v4h-4zM1 11h4v4H1zM11 11h4v4h-4z" fill="#555" strokeWidth="1.300" /></Icon></IconButton>
                <IconButton aria-label="Смарт-объекты"><Icon size={12}><path d="M5 1.500h6l3 3V14H9M5 1.500V7M10 2v4h4" strokeWidth="1.500" /><path d="M1 8h7v7H1z" fill="currentColor" stroke="none" /></Icon></IconButton>
              </FilterIcons>
              <FilterSwitch aria-label="Фильтрация" />
            </LayerRow>
            <LayerRow $height={22}>
              <Select label="Режим наложения" value="Обычные" width={156} dim />
              <Percent>Непрозрачность:<input defaultValue="100%" /></Percent>
              <Spin aria-label="Изменить непрозрачность"><Caret /></Spin>
            </LayerRow>
            <LayerRow $height={25}>
              Закрепить:
              <LockIcons>
                <IconButton $width={19} aria-label="Прозрачные пиксели"><Icon size={12}><path d="M1.500 1.500h13v13h-13z" strokeWidth="1.300" /><path d="M2 2h4v4H2zM10 2h4v4h-4zM6 6h4v4H6zM2 10h4v4H2zM10 10h4v4h-4z" fill="currentColor" stroke="none" /></Icon></IconButton>
                <IconButton $width={19} aria-label="Пиксели изображения"><Icon size={14}><path d="M15.500 1L9 10 7 8z" fill="currentColor" stroke="currentColor" /><path d="M7 9l2 2c-1 4-5 4-8.500 3C4 13 4 9 7 9z" fill="currentColor" stroke="none" /></Icon></IconButton>
                <IconButton $width={19} aria-label="Положение"><Icon size={12}><path d="M8 2v12M2 8h12M6 3.500L8 1l2 2.500M6 12.500L8 15l2-2.500M3.500 6L1 8l2.500 2M12.500 6L15 8l-2.500 2" strokeWidth="1.400" /></Icon></IconButton>
                <IconButton $width={19} aria-label="Закрепить все"><LockIcon /></IconButton>
              </LockIcons>
              <Percent>Заливка:<input defaultValue="100%" /></Percent>
              <Spin aria-label="Изменить заливку"><Caret /></Spin>
            </LayerRow>
            <LayerList>
              <List>
                <LayerItem>
                  <Eye aria-label="Видимость"><Icon size={12}><path d="M1 8c4-6 10-6 14 0-4 6-10 6-14 0z" strokeWidth="1.500" /><circle cx="8" cy="7.500" r="2.500" fill="currentColor" /></Icon></Eye>
                  <LayerName><Thumb /><em>Фон</em><Icon size={12}><path d="M3 7h10v8H3zM5 7V4.500a3 3 0 016 0V7M8 9v3" strokeWidth="1.400" /></Icon></LayerName>
                </LayerItem>
              </List>
              <ListScroll />
            </LayerList>
            <PanelFoot>
              <FootIcon $faint $width={23} aria-label="Связать"><Icon size={12}><path d="M7 5H4a3 3 0 000 6h3M9 5h3a3 3 0 010 6H9M5 8h6" strokeWidth="1.500" /></Icon></FootIcon>
              <FootIcon $faint $width={23} aria-label="Стиль слоя"><Icon size={14}><path d="M8 2c-3-1-3 3-3.500 6S3 14 1 13.500M2.500 6.500H7M8 7c3 0 3 6 6 6M14 7c-3 0-4 6-7 6" strokeWidth="1.300" /></Icon></FootIcon>
              <FootIcon $width={23} aria-label="Маска"><Icon size={12}><path d="M1 2h14v12H1z" fill="currentColor" stroke="none" /><circle cx="8" cy="8" r="3.300" fill="#444" stroke="none" /></Icon></FootIcon>
              <FootIcon $width={23} aria-label="Корректирующий слой"><HalfIcon /></FootIcon>
              <FootIcon $width={22} aria-label="Группа"><Icon size={12}><path d="M1 2h6l1 2h7v10H1z" fill="currentColor" stroke="none" /></Icon></FootIcon>
              <FootIcon $width={23} aria-label="Новый слой"><Icon size={12}><path d="M1 2h14v12H9V8H1z" fill="currentColor" stroke="none" /><path d="M2 10h5v5z" fill="currentColor" stroke="none" /></Icon></FootIcon>
              <FootIcon $faint $width={22} aria-label="Удалить слой"><TrashIcon /></FootIcon>
              <IconButton as="span" $width={18} />
            </PanelFoot>
          </Panel>
        </Panels>
      </WorkArea>
    </Shell>
  );
}
